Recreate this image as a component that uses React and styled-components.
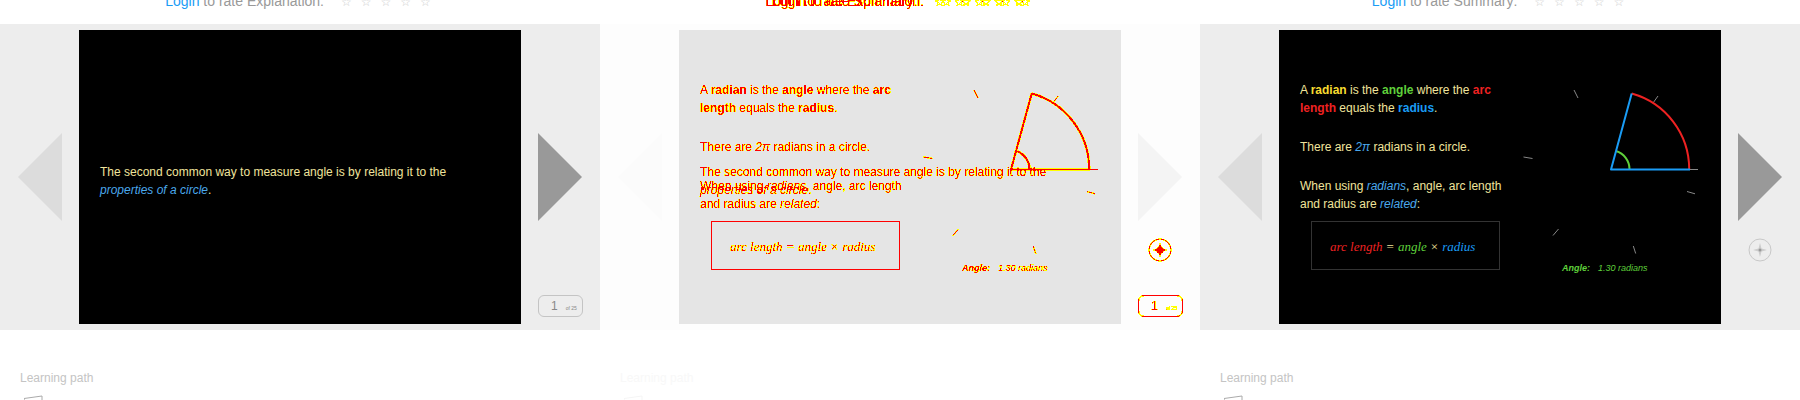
import React from 'react';
import styled, { createGlobalStyle, css } from 'styled-components';

const GlobalStyle = createGlobalStyle`
  * { box-sizing: border-box; }
  body { margin: 0; background: #fff; font-family: "Liberation Sans", Arial, sans-serif; overflow: hidden; }
`;

const Page = styled.main`
  display: grid;
  grid-template-columns: repeat(3, 1fr);
`;

const Panel = styled.section`
  min-width: 0;
`;

const FilterDefs = styled.svg`
  display: block;
  width: 0;
  height: 0;
`;

const marked = css`
  filter: url(#difference);
`;

const Header = styled.header`
  height: 24px;
  padding-bottom: 15px;
  display: grid;
  grid-template-rows: 9px;
  justify-items: center;
  align-items: end;
  ${p => p.$diff && marked}
`;

const Rating = styled.div`
  grid-area: 1 / 1;
  display: flex;
  align-items: baseline;
  height: 16px;
  font-size: 14px;
  line-height: 16px;
  color: #999;
  white-space: nowrap;
`;

const LoginLink = styled.a`
  color: #1a9cf5;
  text-decoration: none;
`;

const Stars = styled.span`
  display: flex;
  gap: 9px;
  margin-left: 17px;
  padding-right: 4px;
  font-family: "DejaVu Sans", sans-serif;
  font-size: 12px;
  color: #ccc;
`;

const Stage = styled.div`
  display: grid;
  grid-template-columns: 79px 1fr 79px;
  height: 306px;
  padding: 6px 0;
  background: ${p => (p.$diff ? '#fdfdfd' : '#ededed')};
`;

const Side = styled.div`
  display: grid;
  grid-template-rows: 103px 88px 1fr auto;
  justify-items: ${p => (p.$right ? 'start' : 'end')};
  padding: 0 17px 7px;
`;

const Arrow = styled.button`
  grid-row: 2;
  width: 44px;
  height: 88px;
  padding: 0;
  border: 0;
  background: ${p => p.$color};
  clip-path: ${p => (p.$next ? 'polygon(0 0, 100% 50%, 0 100%)' : 'polygon(100% 0, 0 50%, 100% 100%)')};
`;

const Tools = styled.div`
  grid-row: 3;
  padding: 17px 0 0 10px;
  ${p => p.$diff && marked}
`;

const CompassButton = styled.button`
  display: block;
  width: 24px;
  height: 24px;
  padding: 0;
  border: 0;
  background: none;
  svg { display: block; }
`;

const Pager = styled.div`
  grid-row: 4;
  display: flex;
  align-items: baseline;
  gap: 8px;
  width: 45px;
  height: 22px;
  padding-left: 12px;
  border: 1px solid #c4c4c4;
  border-radius: 6px;
  font-size: 12px;
  line-height: 20px;
  color: #888;
  ${p => p.$diff && marked}
  ${p => p.$diff && 'border-color: #000; color: #000;'}
`;

const Total = styled.small`
  font-size: 5px;
`;

const Slide = styled.div`
  display: grid;
  grid-template: 294px / 1fr;
  background: ${p => (p.$diff ? '#e5e5e5' : '#000')};
`;

const Layers = styled.div`
  display: grid;
  grid-template: 294px / 1fr;
  font-size: 12px;
  line-height: 18px;
  color: #f0e49c;
  white-space: nowrap;
  ${p => p.$diff && marked}
`;

const Intro = styled.p`
  grid-area: 1 / 1;
  margin: 0;
  padding: 133px 0 0 21px;
`;

const Summary = styled.div`
  grid-area: 1 / 1;
  display: grid;
  grid-template-columns: 241px 1fr;
`;

const Explanation = styled.div`
  padding: 51px 0 0 21px;
`;

const Paragraph = styled.p`
  margin: 0 0 ${p => (p.$last ? '8px' : '21px')};
`;

const Key = styled.strong`
  color: ${p => p.$color};
`;

const Term = styled.em`
  color: ${p => p.$color || '#4aa8ec'};
`;

const Formula = styled.div`
  display: flex;
  align-items: center;
  gap: 4px;
  width: 189px;
  height: 49px;
  margin-left: 11px;
  padding: 2px 0 0 18px;
  border: 1px solid ${p => (p.$diff ? '#fff' : '#333')};
  font-family: "Liberation Serif", "Times New Roman", serif;
  font-size: 13px;
`;

const Figure = styled.figure`
  margin: 0;
  padding-top: 50px;
  svg { display: block; }
`;

const Caption = styled.figcaption`
  display: flex;
  gap: 8px;
  padding-left: 42px;
  font-size: 9px;
  line-height: 16px;
  font-style: italic;
  color: #5fd03b;
`;

const Footer = styled.footer`
  height: 70px;
  padding: 39px 20px 0;
  overflow: hidden;
  font-size: 12px;
  line-height: 18px;
  color: ${p => (p.$diff ? '#f8f8f8' : '#c4c4c4')};
  svg { display: block; margin: 8px 0 0 4px; }
`;

const RED = '#ee2222';
const GREEN = '#5fd03b';
const BLUE = '#1a9cf5';

function RatingLine({ topic }) {
  return (
    <Rating>
      <span><LoginLink href="#login">Login</LoginLink> to rate {topic}:</span>
      <Stars aria-hidden="true">
        {[1, 2, 3, 4, 5].map(n => <span key={n}>☆</span>)}
      </Stars>
    </Rating>
  );
}

function AngleDiagram({ diff }) {
  const tick = diff ? '#999' : '#888';
  return (
    <svg width="190" height="180" viewBox="0 0 190 180" fill="none">
      <g stroke={tick} strokeWidth="1">
        <path d="M54 10l4 8M3.500 77l9 1.500M33 155.500l5.500-6.500M113.300 166l2.400 7.500M167 111.500l8 2.300M133 23l5-7M169 89.500h9" />
      </g>
      <path d="M96 71A19 19 0 0 1 109.500 89" stroke={GREEN} strokeWidth="2" />
      <path d="M111.700 13.500A78.500 78.500 0 0 1 169.200 89" stroke={RED} strokeWidth="2" />
      <path d="M111.700 13.500L91 89.500H170" stroke={BLUE} strokeWidth="2" strokeLinejoin="round" />
    </svg>
  );
}

function IntroSlide() {
  return <Intro>The second common way to measure angle is by relating it to the<br /><Term>properties of a circle</Term>.</Intro>;
}

function SummarySlide({ diff }) {
  return (
    <Summary>
      <Explanation>
        <Paragraph>
          A <Key $color="#f8dc30">radian</Key> is the <Key $color={GREEN}>angle</Key> where the <Key $color={RED}>arc<br />length</Key> equals the <Key $color={BLUE}>radius</Key>.
        </Paragraph>
        <Paragraph>There are <Term>2π</Term> radians in a circle.</Paragraph>
        <Paragraph $last>When using <Term>radians</Term>, angle, arc length<br />and radius are <Term>related</Term>:</Paragraph>
        <Formula $diff={diff}>
          <Term $color={RED}>arc length</Term><span>=</span><Term $color={GREEN}>angle</Term><span>×</span><Term $color={BLUE}>radius</Term>
        </Formula>
      </Explanation>
      <Figure>
        <AngleDiagram diff={diff} />
        <Caption><b>Angle:</b><span>1.30 radians</span></Caption>
      </Figure>
    </Summary>
  );
}

function Compass({ diff }) {
  return (
    <svg width="24" height="24" viewBox="0 0 24 24">
      <circle cx="12" cy="12" r="11" fill="none" stroke={diff ? '#000' : '#c8c8c8'} />
      <path d="M12 5l1.500 5.500L19 12l-5.500 1.500L12 19l-1.500-5.500L5 12l5.500-1.500z" fill={diff ? '#000' : '#ccc'} />
      <circle cx="12" cy="12" r={diff ? 3.5 : 1.5} fill={diff ? '#000' : '#999'} />
    </svg>
  );
}

function Lesson({ intro, summary }) {
  const diff = intro && summary;
  return (
    <Panel>
      <Header $diff={diff}>
        {intro && <RatingLine topic="Explanation" />}
        {summary && <RatingLine topic="Summary" />}
      </Header>
      <Stage $diff={diff}>
        <Side>
          <Arrow aria-label="Previous" $color={diff ? '#fbfbfb' : '#dcdcdc'} />
        </Side>
        <Slide $diff={diff}>
          <Layers $diff={diff}>
            {intro && <IntroSlide />}
            {summary && <SummarySlide diff={diff} />}
          </Layers>
        </Slide>
        <Side $right>
          <Arrow aria-label="Next" $next $color={diff ? '#f4f4f4' : '#999'} />
          {summary && <Tools $diff={diff}><CompassButton aria-label="Explore"><Compass diff={diff} /></CompassButton></Tools>}
          {intro && <Pager $diff={diff}><span>1</span><Total>of 25</Total></Pager>}
        </Side>
      </Stage>
      <Footer $diff={diff}>
        Learning path
        <svg width="20" height="20" viewBox="0 0 20 20" fill="none" stroke={diff ? '#f5f5f5' : '#aaa'}>
          <path d="M0 3.500L18 1v16L2 19z" />
        </svg>
      </Footer>
    </Panel>
  );
}

export default function App() {
  return (
    <>
      <GlobalStyle />
      <FilterDefs aria-hidden="true">
        <filter id="difference" x="0" y="0" width="1" height="1" colorInterpolationFilters="sRGB">
          <feComponentTransfer in="SourceAlpha" result="edge">
            <feFuncA type="linear" slope="40" intercept="-2" />
          </feComponentTransfer>
          <feComponentTransfer in="SourceAlpha" result="core">
            <feFuncA type="linear" slope="40" intercept="-24" />
          </feComponentTransfer>
          <feFlood floodColor="#ff0" />
          <feComposite in2="edge" operator="in" result="yellow" />
          <feFlood floodColor="#f00" />
          <feComposite in2="core" operator="in" result="red" />
          <feMerge><feMergeNode in="yellow" /><feMergeNode in="red" /></feMerge>
        </filter>
      </FilterDefs>
      <Page>
        <Lesson intro />
        <Lesson intro summary />
        <Lesson summary />
      </Page>
    </>
  );
}
